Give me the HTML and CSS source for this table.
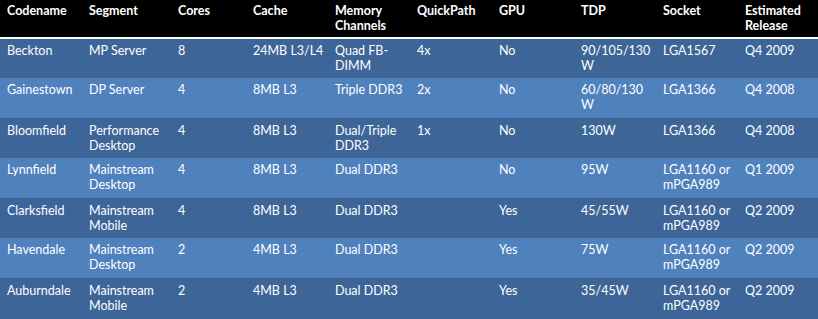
FILE: index.html
```html
<!DOCTYPE html>
<html>
<head>
<meta charset="utf-8">
<link rel="stylesheet" href="styles.css">
</head>
<body>
<table class="cpu">
  <colgroup>
    <col class="c-a"><col class="c-b"><col class="c-c"><col class="c-d"><col class="c-d">
    <col class="c-d"><col class="c-d"><col class="c-d"><col class="c-d"><col class="c-e">
  </colgroup>
  <thead>
    <tr>
      <th>Codename</th><th>Segment</th><th>Cores</th><th>Cache</th><th>Memory Channels</th>
      <th>QuickPath</th><th>GPU</th><th>TDP</th><th>Socket</th><th>Estimated Release</th>
    </tr>
  </thead>
  <tbody>
    <tr class="dark">
      <td>Beckton</td><td>MP Server</td><td>8</td><td>24MB L3/L4</td><td>Quad FB-DIMM</td>
      <td>4x</td><td>No</td><td>90/105/130 W</td><td>LGA1567</td><td>Q4 2009</td>
    </tr>
    <tr class="light">
      <td>Gainestown</td><td>DP Server</td><td>4</td><td>8MB L3</td><td>Triple DDR3</td>
      <td>2x</td><td>No</td><td>60/80/130 W</td><td>LGA1366</td><td>Q4 2008</td>
    </tr>
    <tr class="dark">
      <td>Bloomfield</td><td>Performance Desktop</td><td>4</td><td>8MB L3</td><td>Dual/Triple DDR3</td>
      <td>1x</td><td>No</td><td>130W</td><td>LGA1366</td><td>Q4 2008</td>
    </tr>
    <tr class="light">
      <td>Lynnfield</td><td>Mainstream Desktop</td><td>4</td><td>8MB L3</td><td>Dual DDR3</td>
      <td></td><td>No</td><td>95W</td><td>LGA1160 or mPGA989</td><td>Q1 2009</td>
    </tr>
    <tr class="dark">
      <td>Clarksfield</td><td>Mainstream Mobile</td><td>4</td><td>8MB L3</td><td>Dual DDR3</td>
      <td></td><td>Yes</td><td>45/55W</td><td>LGA1160 or mPGA989</td><td>Q2 2009</td>
    </tr>
    <tr class="light">
      <td>Havendale</td><td>Mainstream Desktop</td><td>2</td><td>4MB L3</td><td>Dual DDR3</td>
      <td></td><td>Yes</td><td>75W</td><td>LGA1160 or mPGA989</td><td>Q2 2009</td>
    </tr>
    <tr class="dark">
      <td>Auburndale</td><td>Mainstream Mobile</td><td>2</td><td>4MB L3</td><td>Dual DDR3</td>
      <td></td><td>Yes</td><td>35/45W</td><td>LGA1160 or mPGA989</td><td>Q2 2009</td>
    </tr>
  </tbody>
</table>
</body>
</html>
```
FILE: styles.css
```css
html, body {
  margin: 0;
  padding: 0;
  background: #3d6597;
}
.cpu {
  width: 818px;
  border-collapse: collapse;
  table-layout: fixed;
  font-family: "Lato", "Liberation Sans", sans-serif;
  font-size: 12.5px;
  line-height: 15px;
  color: #ffffff;
}
.c-a { width: 82px; }
.c-b { width: 89px; }
.c-c { width: 75px; }
.c-d { width: 82px; }
.c-e { width: 80px; }
.cpu th, .cpu td {
  padding: 4px 3px 0 7px;
  text-align: left;
  vertical-align: top;
}
.cpu thead tr {
  height: 38px;
  background: #000000;
  border-bottom: 2px solid #ffffff;
}
.cpu th {
  font-weight: bold;
  padding-top: 3px;
}
.cpu tbody tr {
  height: 40px;
}
.cpu tr.dark {
  background: #3d6597;
}
.cpu tr.light {
  background: #4f81bd;
  border-bottom: 1px solid #3a5f8e;
}
```
